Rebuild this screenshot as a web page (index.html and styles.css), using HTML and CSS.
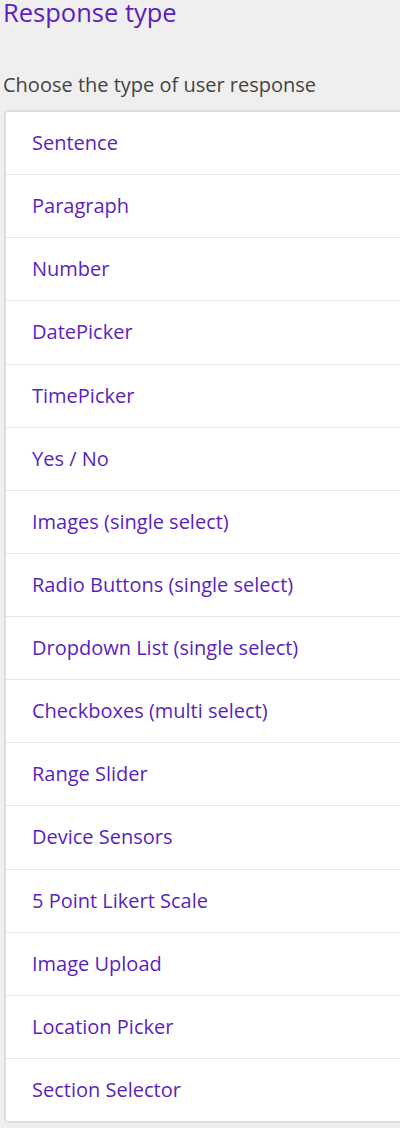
FILE: index.html
```html
<!DOCTYPE html>
<html lang="en">
<head>
<meta charset="utf-8">
<title>Response type</title>
<link rel="stylesheet" href="styles.css">
</head>
<body>
<div class="page">
  <h1 class="title">Response type</h1>
  <p class="subtitle">Choose the type of user response</p>
  <ul class="list">
    <li class="item">Sentence</li>
    <li class="item">Paragraph</li>
    <li class="item">Number</li>
    <li class="item">DatePicker</li>
    <li class="item">TimePicker</li>
    <li class="item">Yes / No</li>
    <li class="item">Images (single select)</li>
    <li class="item">Radio Buttons (single select)</li>
    <li class="item">Dropdown List (single select)</li>
    <li class="item">Checkboxes (multi select)</li>
    <li class="item">Range Slider</li>
    <li class="item">Device Sensors</li>
    <li class="item">5 Point Likert Scale</li>
    <li class="item">Image Upload</li>
    <li class="item">Location Picker</li>
    <li class="item">Section Selector</li>
  </ul>
</div>
</body>
</html>
```

FILE: styles.css
```css
html, body {
  margin: 0;
  padding: 0;
  background: #ffffff;
}
body {
  font-family: "Open Sans", "Liberation Sans", sans-serif;
}
.page {
  width: 400px;
  height: 1128px;
  background: #efefef;
  box-sizing: border-box;
  padding: 0 0 0 4px;
  overflow: hidden;
}
.title {
  margin: 0 0 0 -1px;
  font-size: 25.5px;
  font-weight: 400;
  line-height: 24px;
  height: 24px;
  color: #5a1fbe;
}
.subtitle {
  margin: 48px 0 0 -1px;
  font-size: 20px;
  line-height: 26px;
  color: #444444;
}
.list {
  list-style: none;
  margin: 12px 0 0 0;
  padding: 0;
  background: #ffffff;
  border: 2px solid #dedede;
  border-right: none;
  border-radius: 4px 0 0 4px;
}
.item {
  height: 62.13px;
  line-height: 62px;
  padding-left: 26px;
  font-size: 20px;
  color: #5a1fbe;
  border-top: 1px solid #e6e6e6;
}
.item:first-child {
  border-top: none;
}
```
